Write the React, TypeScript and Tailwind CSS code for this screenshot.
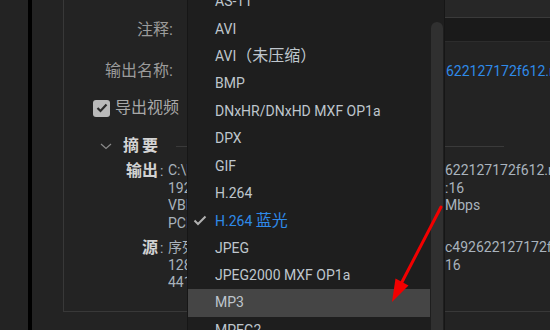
const formats = [
  { name: "AS-11" },
  { name: "AVI" },
  { name: "AVI", cjk: "（未压缩）" },
  { name: "BMP" },
  { name: "DNxHR/DNxHD MXF OP1a" },
  { name: "DPX" },
  { name: "GIF" },
  { name: "H.264" },
  { name: "H.264 ", cjk: "蓝光", checked: true },
  { name: "JPEG" },
  { name: "JPEG2000 MXF OP1a" },
  { name: "MP3", hover: true },
  { name: "MPEG2" },
];

const outputLines = [
  { head: "C:\\Users\\Administrator\\Videos\\b3e7c6f2a1d", tail: "622127172f612.mp4" },
  { head: "1920x1080 (1.0), 25 fps, 逐行, Hardware, 00:00:00", tail: ":16" },
  { head: "VBR, 1 次, 目标 10.00 Mbps, 最大 12.00 ", tail: "Mbps" },
  { head: "PCM, 48000 Hz, 立体声, 16 位", tail: "" },
];

const sourceLines = [
  { head: "序列, 7f3a0d1e8b5c4a9e2d6b1a", tail: "c492622127172f612" },
  { head: "1280x720 (1.0), 25 fps, 逐行, 00:00:00:", tail: "16" },
  { head: "44100 Hz, 立体声", tail: "" },
];

function SummaryGroup({ label, lines }: { label: string; lines: { head: string; tail: string }[] }) {
  return (
    <div className="flex">
      <div className="w-[94px] text-right font-bold text-[16px] leading-[18px] text-[#d2d2d2]">{label}</div>
      <div className="w-[10px] pl-[2px] text-[14px] leading-[18px] text-[#a9b3bd]">:</div>
      <div className="flex flex-col text-[14px] leading-[17.7px] text-[#a9b3bd]">
        {lines.map((l, i) => (
          <div key={i} className="flex whitespace-nowrap">
            <span className="w-[277px] overflow-hidden">{l.head}</span>
            <span>{l.tail}</span>
          </div>
        ))}
      </div>
    </div>
  );
}

export default function App() {
  return (
    <div className="relative w-[550px] h-[330px] overflow-hidden bg-[#232323] font-['Roboto','Noto_Sans_CJK_SC',sans-serif]">
      <div className="flex h-full">
        <div className="w-[28px] shrink-0" />
        <div className="w-[4px] shrink-0 bg-black" />
        <div className="w-[31px] shrink-0" />

        {/* export settings panel */}
        <div className="w-[600px] h-[312px] shrink-0 border-l border-b border-[#383838] flex flex-col">
          <div className="h-[17px] flex">
            <div className="w-[124px]" />
            <div className="flex-1 bg-[#272727]" />
          </div>

          <div className="h-[25px] flex items-center">
            <div className="w-[109px] text-right text-[16px] text-[#9b9b9b]">注释:</div>
            <div className="ml-[15px] flex-1 self-stretch border-t border-b border-t-[#3a3a3a] border-b-[#2c2c2c] bg-[#1a1a1a]" />
          </div>

          <div className="mt-[19px] h-[20px] flex items-center">
            <div className="w-[109px] text-right text-[16px] text-[#9b9b9b]">输出名称:</div>
            <div className="ml-[15px] flex whitespace-nowrap text-[14px] text-[#2f8ae8]">
              <span className="w-[258px] overflow-hidden">e3b7c8d0a1f24c6b9d0e5</span>
              <span>622127172f612.mp4</span>
            </div>
          </div>

          <div className="mt-[17px] h-[20px] flex items-center pl-[29px]">
            <div className="w-[17px] h-[17px] rounded-[3px] bg-[#b9b9b9] flex items-center justify-center">
              <svg width="12" height="10" viewBox="0 0 12 10">
                <polyline points="1.5,5 4.5,8 10.5,1.5" fill="none" stroke="#2a2a2a" strokeWidth="2.2" />
              </svg>
            </div>
            <span className="ml-[5px] text-[16px] text-[#a8a8a8]">导出视频</span>
          </div>

          <div className="mt-[18px] h-[20px] flex items-center pl-[36px]">
            <svg width="12" height="7" viewBox="0 0 12 7">
              <polyline points="1,1 6,5.5 11,1" fill="none" stroke="#8a8a8a" strokeWidth="1.2" />
            </svg>
            <span className="ml-[11px] text-[16px] font-bold tracking-[3px] text-[#d4d4d4]">摘要</span>
            <div className="ml-[15px] w-[328px] h-px bg-[#3a3a3a]" />
          </div>

          <div className="mt-[6px] flex flex-col gap-[6px]">
            <SummaryGroup label="输出" lines={outputLines} />
            <SummaryGroup label="源" lines={sourceLines} />
          </div>
        </div>
      </div>

      {/* format dropdown */}
      <div className="absolute left-[187px] top-0 h-full w-[258px] flex border-x border-[#161616] bg-[#1e1e1e]">
        <div className="w-[242px] -mt-[12px] flex flex-col">
          {formats.map((f, i) => (
            <div
              key={i}
              className={`h-[27.4px] shrink-0 flex items-center whitespace-pre text-[14px] ${f.hover ? "bg-[#454545]" : ""} ${f.checked ? "text-[#2f8ae8]" : "text-[#bfc6cd]"}`}
            >
              <div className="w-[27px] shrink-0 flex items-center pl-[5px]">
                {f.checked && (
                  <svg width="14" height="11" viewBox="0 0 14 11">
                    <polyline points="1.5,5.5 5,9 12.5,1.5" fill="none" stroke="#b0b0b0" strokeWidth="2" />
                  </svg>
                )}
              </div>
              <span>
                {f.name}
                {f.cjk && <span className="text-[16px]">{f.cjk}</span>}
              </span>
            </div>
          ))}
        </div>
        <div className="w-[14px] pt-[22px] pl-[1px]">
          <div className="w-[12px] h-full rounded-t-full bg-[#303030]" />
        </div>
      </div>

      {/* red annotation arrow */}
      <svg className="absolute inset-0 pointer-events-none" width="550" height="330" viewBox="0 0 550 330">
        <line x1="441" y1="207" x2="402" y2="282" stroke="#f20000" strokeWidth="3" strokeLinecap="round" />
        <polygon points="392,302 408.5,285.5 395.5,278.5" fill="#f20000" />
      </svg>
    </div>
  );
}
